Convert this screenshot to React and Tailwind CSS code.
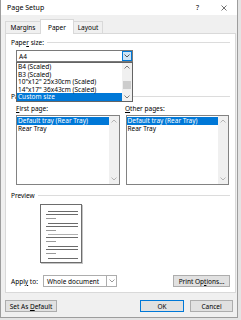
import React from "react"

const Chevron = ({ up = false, color = "#333" }) => (
  <svg width="6" height="4" viewBox="0 0 6 4">
    <path
      d={up ? "M0.5 3.5 L3 1 L5.5 3.5" : "M0.5 0.5 L3 3 L5.5 0.5"}
      fill="none"
      stroke={color}
      strokeWidth="0.8"
    />
  </svg>
)

const Section = ({ children, className = "" }) => (
  <div className={`flex items-center h-[7px] pl-[5px] pr-[5px] ${className}`}>
    <span className="whitespace-nowrap">{children}</span>
    <div className="flex-1 h-px bg-[#dcdcdc] ml-[3px]" />
  </div>
)

const TrayList = ({ items }) => (
  <div className="flex-1 h-full border border-[#828282] bg-white flex">
    <div className="flex-1 pt-[1px]">
      {items.map((it, i) => (
        <div
          key={it}
          className={`h-[8px] leading-[8px] pl-[1px] whitespace-nowrap ${
            i === 0 ? "bg-[#0078d7] text-white" : ""
          }`}
        >
          {it}
        </div>
      ))}
    </div>
    <div className="w-[10px] bg-[#f0f0f0] flex flex-col items-center justify-between py-[3px]">
      <Chevron up color="#a6a6a6" />
      <Chevron color="#a6a6a6" />
    </div>
  </div>
)

const Btn = ({ children, className = "" }) => (
  <div
    className={`h-[12px] border bg-[#e1e1e1] flex items-center justify-center whitespace-pre ${className}`}
  >
    {children}
  </div>
)

// preview thumbnail lines: [y, x1, x2, colour]
const pageLines = [
  [6, 7, 37, "#6b6b6b"],
  [9, 5, 37, "#6b6b6b"],
  [13, 5, 15, "#9a9a9a"],
  [18, 7, 37, "#6b6b6b"],
  [21, 5, 37, "#6b6b6b"],
  [25, 5, 15, "#9a9a9a"],
  [29, 7, 37, "#b0b0b0"],
  [32, 5, 37, "#6b6b6b"],
  [36, 5, 15, "#9a9a9a"],
  [41, 7, 37, "#6b6b6b"],
  [44, 5, 37, "#6b6b6b"],
  [48, 5, 15, "#9a9a9a"],
  [53, 7, 37, "#6b6b6b"],
]

export default function App() {
  return (
    <div className="w-[241px] h-[320px] bg-[#e4e4e4] overflow-hidden text-black text-[6.5px] leading-[7px] font-['Noto_Sans',sans-serif]">
      <div className="w-[238px] h-[318px] border-l border-r border-b border-[#9d9d9d] bg-[#f0f0f0] flex flex-col">
        {/* title bar */}
        <div className="h-[15px] bg-white flex items-center pl-[6px] pr-[10px]">
          <span className="flex-1 text-[7px]">Page Setup</span>
          <span className="text-[7px] mr-[22px]">?</span>
          <svg width="6" height="6" viewBox="0 0 6 6">
            <path d="M0.5 0.5 L5.5 5.5 M5.5 0.5 L0.5 5.5" stroke="#333" strokeWidth="0.7" />
          </svg>
        </div>
        <div className="h-[4px]" />

        {/* tabs */}
        <div className="h-[14px] flex items-end pl-[4px] relative z-10">
          <div className="w-[36px] h-[12px] border border-b-0 border-[#d9d9d9] bg-[#f0f0f0] flex items-center justify-center">
            Margins
          </div>
          <div className="w-[34px] h-[15px] -ml-px -mb-px border border-b-0 border-[#d9d9d9] bg-white flex items-center justify-center">
            Paper
          </div>
          <div className="w-[30px] h-[12px] -ml-px border border-b-0 border-[#d9d9d9] bg-[#f0f0f0] flex items-center justify-center">
            Layout
          </div>
        </div>

        {/* panel */}
        <div className="ml-[4px] w-[231px] h-[260px] border border-[#d9d9d9] bg-white relative flex flex-col">
          <Section className="mt-[5px]">
            Pape<span className="underline">r</span> size:
          </Section>

          <div className="mt-[4px] ml-[10px] w-[117px] h-[12px] border border-[#7a7a7a] flex">
            <div className="flex-1 pl-[2px] flex items-center">A4</div>
            <div className="w-[10px] h-full border border-[#0078d7] bg-[#cce4f7] flex items-center justify-center">
              <Chevron color="#333" />
            </div>
          </div>

          {/* open dropdown list */}
          <div className="absolute left-[10px] top-[28px] w-[117px] h-[40px] border border-[#646464] bg-white flex z-20">
            <div className="flex-1">
              {[
                "B4 (Scaled)",
                "B3 (Scaled)",
                '10"x12" 25x30cm (Scaled)',
                '14"x17" 36x43cm (Scaled)',
              ].map((t) => (
                <div key={t} className="h-[7.6px] leading-[7.6px] pl-[1px] whitespace-nowrap">
                  {t}
                </div>
              ))}
              <div className="h-[7.6px] leading-[7.6px] pl-[1px] bg-[#0078d7] text-white">
                Custom size
              </div>
            </div>
            <div className="w-[10px] bg-[#f0f0f0] flex flex-col items-center">
              <div className="h-[8px] flex items-center">
                <Chevron up color="#606060" />
              </div>
              <div className="w-[8px] h-[8px] mt-[10px] bg-[#cdcdcd]" />
              <div className="mt-auto h-[8px] flex items-center">
                <Chevron color="#606060" />
              </div>
            </div>
          </div>

          <Section className="mt-[31px]">Paper source</Section>

          <div className="mt-[5px] ml-[10px] flex gap-[6px] h-[7px]">
            <div className="w-[103px]">
              <span className="underline">F</span>irst page:
            </div>
            <div className="w-[104px]">
              <span className="underline">O</span>ther pages:
            </div>
          </div>

          <div className="mt-[3px] ml-[10px] flex gap-[6px] h-[70px] w-[213px]">
            <TrayList items={["Default tray (Rear Tray)", "Rear Tray"]} />
            <TrayList items={["Default tray (Rear Tray)", "Rear Tray"]} />
          </div>

          <Section className="mt-[7px]">Preview</Section>

          <div className="mt-[5px] ml-[34px] w-[42px] h-[59px] border border-[#6d6d6d] bg-white shadow-[1px_1px_0_#c4c4c4]">
            <svg width="40" height="57" viewBox="0 0 40 57">
              {pageLines.map(([y, x1, x2, c]) => (
                <line key={y} x1={x1} x2={x2} y1={y + 0.5} y2={y + 0.5} stroke={c} strokeWidth="1" />
              ))}
            </svg>
          </div>

          <div className="mt-[12px] h-[12px] flex items-center pl-[5px] pr-[5px]">
            <span className="w-[32px]">
              Appl<span className="underline">y</span> to:
            </span>
            <div className="w-[74px] h-[12px] border border-[#adadad] bg-white flex">
              <div className="flex-1 pl-[3px] flex items-center">Whole document</div>
              <div className="w-[10px] border-l border-[#adadad] flex items-center justify-center">
                <Chevron color="#808080" />
              </div>
            </div>
            <Btn className="ml-auto w-[57px] border-[#adadad]">
              Print Op<span className="underline">t</span>ions...
            </Btn>
          </div>
        </div>

        {/* footer buttons */}
        <div className="mt-[7px] flex items-center pl-[4px] pr-[4px]">
          <Btn className="w-[52px] border-[#adadad]">
            <span>Set As{" "}</span>
            <span className="underline">D</span>
            <span>efault</span>
          </Btn>
          <Btn className="ml-auto w-[44px] border-[#0078d7]">OK</Btn>
          <Btn className="ml-[6px] w-[43px] border-[#adadad]">Cancel</Btn>
        </div>
      </div>
    </div>
  )
}
